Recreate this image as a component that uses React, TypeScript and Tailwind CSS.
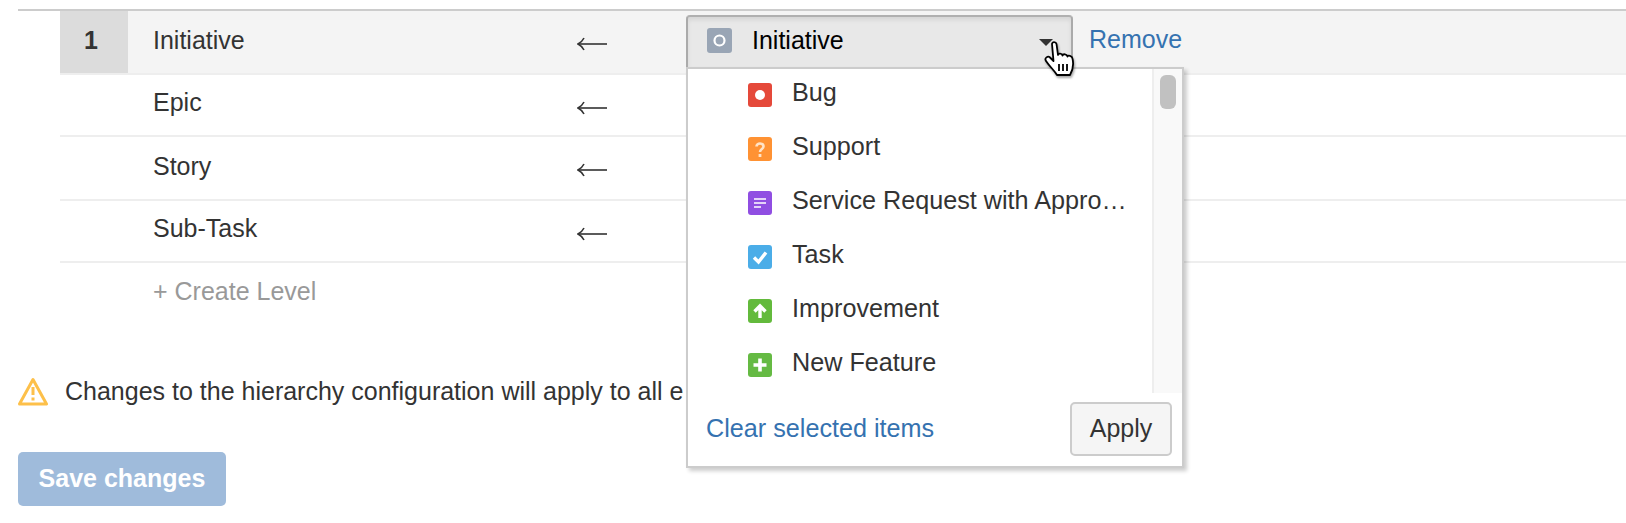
const F = "font-['Liberation_Sans',Arial,sans-serif]";

function Arrow({ className }: { className: string }) {
  return (
    <svg className={`block ${className}`} width="30" height="14" viewBox="0 0 30 14" fill="none" stroke="#333" strokeWidth="1.6">
      <path d="M1 7 H30" />
      <path d="M7 1 Q5 5 1 7 Q5 9 7 13" />
    </svg>
  );
}

function Tile({ color, children }: { color: string; children: React.ReactNode }) {
  return (
    <span className={`flex h-[24px] w-[24px] shrink-0 items-center justify-center rounded-[3px] ${color}`}>
      <svg width="24" height="24" viewBox="0 0 24 24" fill="none">{children}</svg>
    </span>
  );
}

const items: { label: string; color: string; icon: React.ReactNode }[] = [
  { label: "Bug", color: "bg-[#e5493a]", icon: <circle cx="12" cy="12" r="5" fill="#fff" /> },
  { label: "Support", color: "bg-[#ff9233]", icon: <><path d="M8.5 9.5 C8.5 5.5 15.5 5.5 15.5 9.5 C15.5 12 12 12 12 15" stroke="#ffe3c7" strokeWidth="2.6" /><rect x="10.6" y="17" width="2.8" height="3" fill="#ffe3c7" /></> },
  { label: "Service Request with Appro…", color: "bg-[#904ee2]", icon: <path d="M6 8 H18 M6 12 H18 M6 16 H13" stroke="#fff" strokeWidth="1.6" /> },
  { label: "Task", color: "bg-[#4bade8]", icon: <path d="M6 12.5 L10.5 17 L18 7.5" stroke="#fff" strokeWidth="3.4" /> },
  { label: "Improvement", color: "bg-[#63ba3c]", icon: <path d="M12 19 V7 M6.5 12.5 L12 7 L17.5 12.5" stroke="#fff" strokeWidth="3.4" /> },
  { label: "New Feature", color: "bg-[#65ba43]", icon: <path d="M12 5.5 V18.5 M5.5 12 H18.5" stroke="#fff" strokeWidth="3.6" /> },
];

function Dropdown() {
  return (
    <div className="absolute left-0 top-[52px] z-10 w-[498px] border-2 border-[#ccc] bg-white shadow-[3px_3px_4px_rgba(0,0,0,0.2)]">
      <div className="flex h-[324px]">
        <ul className="flex flex-1 flex-col overflow-hidden pl-[60px] pt-[14px]">
          {items.map((it) => (
            <li key={it.label} className="flex h-[54px] shrink-0 items-start gap-[20px] text-[25.2px] leading-[24px] text-[#333]">
              <Tile color={it.color}>{it.icon}</Tile>
              <span className="-mt-[3px] whitespace-nowrap">{it.label}</span>
            </li>
          ))}
        </ul>
        <div className="w-[30px] border-l-2 border-[#eee] bg-[#f9f9f9] pl-[6px] pt-[6px]">
          <div className="h-[34px] w-[16px] rounded-[6px] bg-[#c1c1c1]" />
        </div>
      </div>
      <div className="flex h-[73px] items-start justify-between pl-[18px] pr-[10px] pt-[9px]">
        <a className="pt-[11px] text-[25.2px] leading-[30px] text-[#3572b0]">Clear selected items</a>
        <button className="h-[54px] w-[102px] rounded-[5px] border-2 border-[#ccc] bg-[#f5f5f5] text-[25px] text-[#333]">Apply</button>
      </div>
    </div>
  );
}

function HandCursor() {
  return (
    <svg className="absolute left-[358px] top-[26px] z-20 drop-shadow-[1px_2px_1px_rgba(0,0,0,0.35)]" width="34" height="36" viewBox="0 0 34 36" fill="#fff" stroke="#000" strokeWidth="1.8" strokeLinejoin="round">
      <path d="M8 3 C8 0.5 12 0.5 12.5 3 L14 14 C14 12 18 12 18.5 14.5 C19 12.5 23 13 23.5 15.5 C24 14 28 14.5 28.5 17.5 C29.5 22 29.5 28 26 34 L13 34 C10 29 6 26 2 20 C0 17 4 14.5 6 16.5 L9.5 20 Z" />
      <path d="M15 23 V30 M19 23 V30 M23 23 V30" fill="none" strokeWidth="1.8" />
    </svg>
  );
}

function Row({ name, arrowClass, textClass, h }: { name: string; arrowClass: string; textClass: string; h: string }) {
  return (
    <div className={`flex ${h} border-b-2 border-[#eee]`}>
      <div className="w-[68px]" />
      <div className={`w-[449px] pl-[25px] text-[25px] leading-[30px] text-[#333] ${textClass}`}>{name}</div>
      <Arrow className={arrowClass} />
    </div>
  );
}

export default function App() {
  return (
    <div className={`h-[523px] w-[1626px] overflow-hidden bg-white pl-[18px] pt-[9px] ${F}`}>
      <div className="h-[2px] bg-[#ccc]" />
      <div className="pl-[42px]">
        <div className="flex h-[64px] border-b-2 border-[#eee] bg-[#f4f4f4]">
          <div className="flex h-[62px] w-[68px] items-center justify-center bg-[#dcdcdc] pb-[3px] pr-[6px] text-[25px] font-bold text-[#333]">1</div>
          <div className="w-[449px] pl-[25px] pt-[14px] text-[25px] leading-[30px] text-[#333]">Initiative</div>
          <Arrow className="mt-[26px]" />
          <div className="relative ml-[79px] mt-[4px] h-[53px] w-[387px]">
            <div className="flex h-[53px] items-center rounded-t-[4px] border-2 border-b-0 border-[#aaa] border-t-[#b0b0b0] bg-[#e8e8e8] pl-[19px] pb-[4px] shadow-[inset_0_3px_4px_rgba(0,0,0,0.08)]">
              <span className="flex h-[25px] w-[25px] items-center justify-center rounded-[3px] bg-[#99a5b5]">
                <svg width="25" height="25" viewBox="0 0 25 25" fill="none"><circle cx="12.5" cy="12.5" r="5" stroke="#fff" strokeWidth="2.2" /></svg>
              </span>
              <span className="ml-[20px] text-[25px] text-black">Initiative</span>
              <svg className="absolute left-[353px] top-[24px]" width="18" height="8" viewBox="0 0 18 8"><path d="M0 0 H14 L7 7 Z" fill="#333" /></svg>
            </div>
            <Dropdown />
            <HandCursor />
          </div>
          <a className="ml-[16px] pt-[13px] text-[25px] leading-[30px] text-[#3572b0]">Remove</a>
        </div>
        <Row name="Epic" h="h-[62px]" textClass="pt-[12px]" arrowClass="mt-[26px]" />
        <Row name="Story" h="h-[64px]" textClass="pt-[14px]" arrowClass="mt-[26px]" />
        <Row name="Sub-Task" h="h-[62px]" textClass="pt-[12px]" arrowClass="mt-[26px]" />
        <div className="pl-[93px] pt-[13px] text-[25px] leading-[30px] text-[#999]">+ Create Level</div>
      </div>
      <div className="mt-[71px] flex h-[30px] items-center">
        <svg width="30" height="30" viewBox="0 0 30 30" fill="none" stroke="#fdc04a" strokeWidth="3" strokeLinejoin="round">
          <path d="M15 2.5 L28.5 27 H1.5 Z" />
          <path d="M15 10 V18 M15 20.5 V23.5" strokeWidth="3" />
        </svg>
        <span className="ml-[17px] whitespace-nowrap text-[25px] text-[#333]">Changes to the hierarchy configuration will apply to all e</span>
      </div>
      <button className="mt-[45px] h-[54px] w-[208px] rounded-[5px] bg-[#9fbbdb] text-[25px] font-bold text-white">Save changes</button>
    </div>
  );
}
